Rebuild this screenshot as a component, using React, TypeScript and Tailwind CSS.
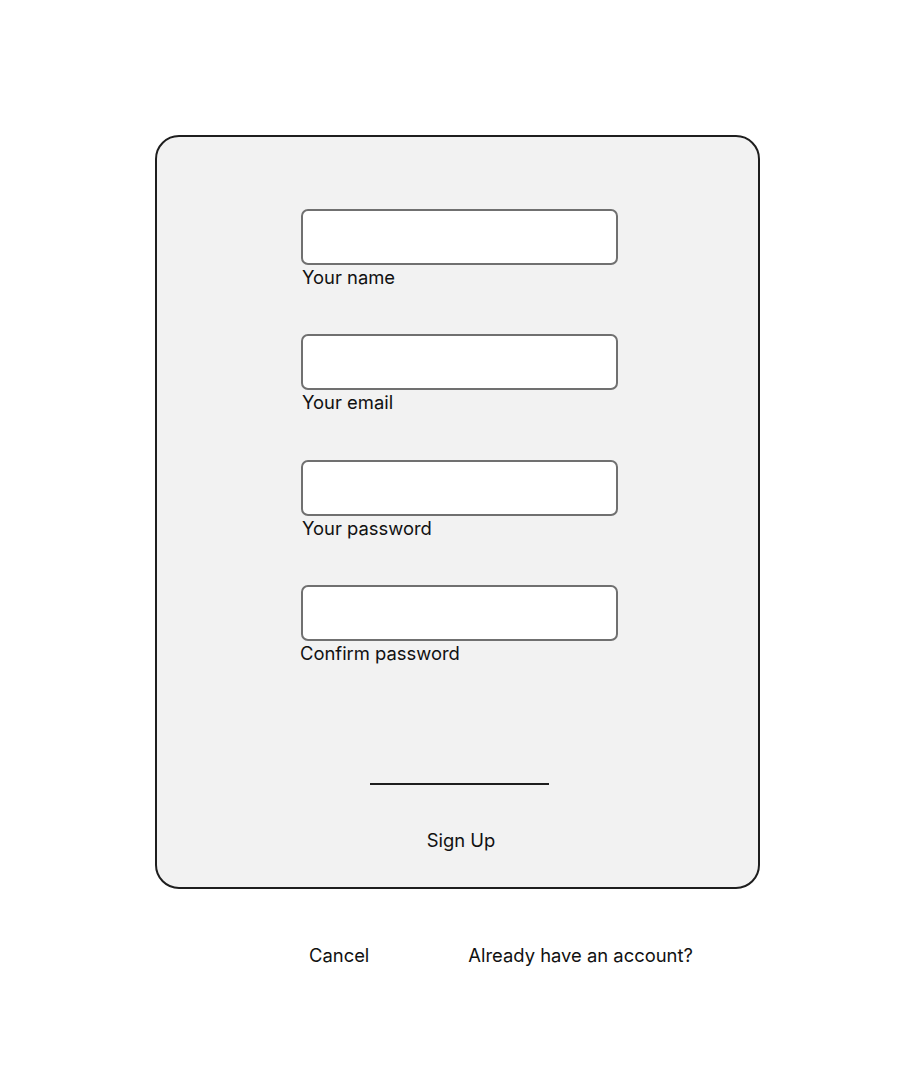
const fields = ['Your name', 'Your email', 'Your password', 'Confirm password'];

export default function App() {
  return (
    <div
      className="min-h-[1079px] w-[900px] bg-white text-[#111]"
      style={{ fontFamily: 'Inter, "Noto Sans", sans-serif' }}
    >
      <div className="pt-[135px] pl-[155px]">
        <div className="flex h-[754px] w-[605px] flex-col rounded-[24px] border-2 border-[#1e1e1e] bg-[#f2f2f2] pt-[72px] pl-[144px]">
          {fields.map((label, i) => (
            <div key={label} className="mb-[45.4px] flex flex-col">
              <div className="h-[56px] w-[317px] rounded-[7px] border-2 border-[#707070] bg-white" />
              <span className={`text-[18.4px] leading-6 ${i === 3 ? '-ml-[1px]' : 'ml-[1px]'}`}>{label}</span>
            </div>
          ))}
          <div className="mt-[72px] ml-[69px] h-[2px] w-[179px] bg-[#1e1e1e]" />
          <div className="mt-[43px] ml-[110px] w-[100px] whitespace-nowrap text-center text-[18.4px] leading-6">Sign Up</div>
        </div>
      </div>
      <div className="mt-[54px] flex text-[18.4px] leading-6">
        <span className="ml-[309px]">Cancel</span>
        <span className="ml-[99px]">Already have an account?</span>
      </div>
    </div>
  );
}
